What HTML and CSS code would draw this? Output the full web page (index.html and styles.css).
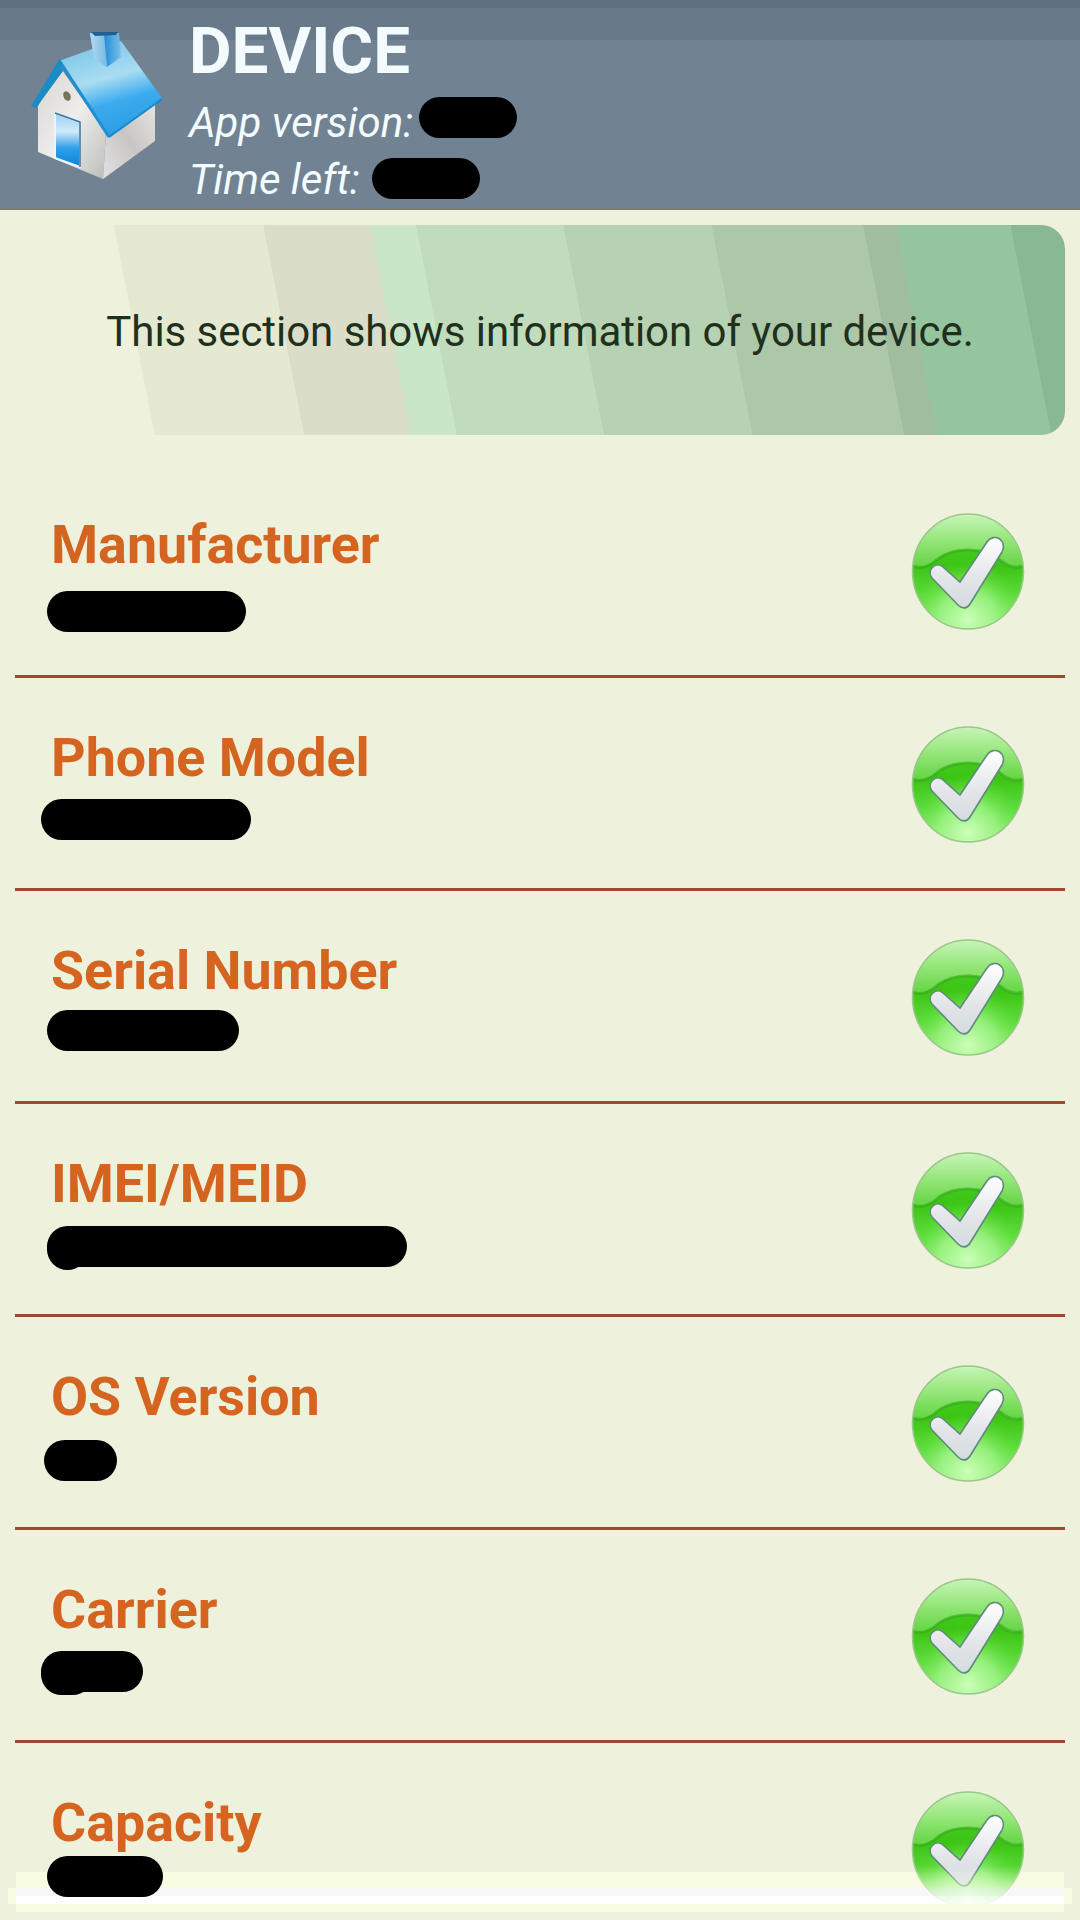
FILE: index.html
```html
<!DOCTYPE html>
<html lang="en">
<head>
<meta charset="utf-8">
<title>Device</title>
<link rel="stylesheet" href="styles.css">
</head>
<body>
<svg class="defs" width="0" height="0" aria-hidden="true">
  <defs>
    <linearGradient id="ball" x1="0" y1="0" x2="0" y2="1">
      <stop offset="0" stop-color="#4fd42c"/><stop offset=".45" stop-color="#3cc414"/><stop offset=".72" stop-color="#5fdc3e"/><stop offset="1" stop-color="#a5f28c"/>
    </linearGradient>
    <radialGradient id="glow" cx=".5" cy=".92" r=".52">
      <stop offset="0" stop-color="#cbffb8"/><stop offset=".5" stop-color="#a0f488" stop-opacity=".75"/><stop offset="1" stop-color="#50dc28" stop-opacity="0"/>
    </radialGradient>
    <linearGradient id="gloss" x1="0" y1="0" x2="0" y2="1">
      <stop offset="0" stop-color="#c8f5b8"/><stop offset=".5" stop-color="#93e678"/><stop offset="1" stop-color="#62d440"/>
    </linearGradient>
    <linearGradient id="tick" x1="0" y1="0" x2="0" y2="1">
      <stop offset="0" stop-color="#ffffff"/><stop offset=".6" stop-color="#e2e4e8"/><stop offset="1" stop-color="#d4dcdf"/>
    </linearGradient>
    <symbol id="check" viewBox="0 0 116 120">
      <ellipse cx="58" cy="59.500" rx="55.500" ry="57.500" fill="url(#ball)"/>
      <ellipse cx="58" cy="59.500" rx="55.500" ry="57.500" fill="url(#glow)"/>
      <path d="M3 54C5 24 28 2 58 2S111 24 113 54C104 58 96 54 90 48C74 35 46 35 30 45C22 52 12 57 3 54Z" fill="url(#gloss)"/>
      <path d="M3 54C12 58 22 53 29 46C46 35 72 35 90 48C97 54 105 57 113 54" fill="none" stroke="#35a81c" stroke-width="3" opacity=".6"/>
      <ellipse cx="58" cy="59.500" rx="55.500" ry="57.500" fill="none" stroke="#9cc68c" stroke-width="1.500"/>
      <path d="M22 66C16 58 26 49 33 55L50 70L77 30C84 20 98 28 92 40L60 92C57 97 52 97 48 93Z" fill="url(#tick)" stroke="#5f8a7c" stroke-width="1.600"/>
    </symbol>
    <linearGradient id="roof" x1=".3" y1="0" x2=".6" y2="1">
      <stop offset="0" stop-color="#7cc4ea"/><stop offset=".4" stop-color="#a9ddf2"/><stop offset=".65" stop-color="#3cabee"/><stop offset="1" stop-color="#2a9ce4"/>
    </linearGradient>
    <linearGradient id="wall" x1="0" y1="0" x2="1" y2="1">
      <stop offset="0" stop-color="#d8d4d0"/><stop offset=".5" stop-color="#eeeeed"/><stop offset="1" stop-color="#bcbcbb"/>
    </linearGradient>
    <linearGradient id="side" x1="0" y1="1" x2="1" y2="0">
      <stop offset="0" stop-color="#e2e2e2"/><stop offset=".5" stop-color="#c8c6c4"/><stop offset="1" stop-color="#e8e4e0"/>
    </linearGradient>
    <linearGradient id="door" x1="0" y1="0" x2="0" y2="1">
      <stop offset="0" stop-color="#9cd2f4"/><stop offset=".35" stop-color="#cfe9fa"/><stop offset=".65" stop-color="#2f9fe8"/><stop offset="1" stop-color="#0b82da"/>
    </linearGradient>
    <linearGradient id="flue" x1="0" y1="0" x2="1" y2="0">
      <stop offset="0" stop-color="#cfe9f8"/><stop offset=".5" stop-color="#2c90d6"/><stop offset="1" stop-color="#78c0ea"/>
    </linearGradient>
  </defs>
</svg>

<header class="header">
  <svg class="house" viewBox="0 0 140 154">
    <path d="M10 77L32 38L78 104L75 150L10 123Z" fill="url(#wall)"/>
    <path d="M75 150L78 104L127 72V112Z" fill="url(#side)"/>
    <path d="M27 84L52 93V138L27 129Z" fill="url(#door)" stroke="#eef5f8" stroke-width="2"/>
    <path d="M27 84L52 93V138" fill="none" stroke="#376f94" stroke-width="1.500"/>
    <ellipse cx="39" cy="67" rx="3.500" ry="5" transform="rotate(-25 39 67)" fill="#77745d"/>
    <path d="M31 32L64 20L93 12L134 69L81 108Z" fill="url(#roof)"/>
    <path d="M31 31L81 108" fill="none" stroke="#1e8fd4" stroke-width="3"/>
    <path d="M32 29L3 77L8 79L35 42Z" fill="#1b8bc6"/>
    <path d="M81 108L134 70" fill="none" stroke="#1787d2" stroke-width="2"/>
    <path d="M62 4L91 4L93 28L79 38L66 29Z" fill="url(#flue)"/>
    <path d="M62 4L76 6L79 38L66 29Z" fill="#a6d4ee" opacity=".65"/>
    <path d="M63 3H90L88 6L67 7Z" fill="#235f91"/>
  </svg>
  <div class="heading">
    <h1 class="title">DEVICE</h1>
    <p class="meta">App version:<span class="mask mask-version"></span></p>
    <p class="meta">Time left:<span class="mask mask-time"></span></p>
  </div>
</header>

<section class="banner">This section shows information of your device.</section>

<main class="list">
  <div class="row"><div class="info"><h2 class="label">Manufacturer</h2><span class="mask mask-manufacturer"></span></div><svg class="check"><use href="#check"/></svg></div>
  <div class="row"><div class="info"><h2 class="label">Phone Model</h2><span class="mask mask-model"></span></div><svg class="check"><use href="#check"/></svg></div>
  <div class="row"><div class="info"><h2 class="label">Serial Number</h2><span class="mask mask-serial"></span></div><svg class="check"><use href="#check"/></svg></div>
  <div class="row"><div class="info"><h2 class="label">IMEI/MEID</h2><span class="mask mask-imei"></span></div><svg class="check"><use href="#check"/></svg></div>
  <div class="row"><div class="info"><h2 class="label">OS Version</h2><span class="mask mask-os"></span></div><svg class="check"><use href="#check"/></svg></div>
  <div class="row"><div class="info"><h2 class="label">Carrier</h2><span class="mask mask-carrier"></span></div><svg class="check"><use href="#check"/></svg></div>
  <div class="row"><div class="info"><h2 class="label">Capacity</h2><span class="mask mask-capacity"></span></div><svg class="check check-fading"><use href="#check"/></svg></div>
</main>
<div class="fade"></div>
</body>
</html>
```
FILE: styles.css
```css
* { box-sizing: border-box; margin: 0; padding: 0; }

body {
  position: relative;
  width: 1080px;
  height: 1920px;
  overflow: hidden;
  display: flex;
  flex-direction: column;
  background: #eef1db;
  font-family: Roboto, "Liberation Sans", sans-serif;
}

.defs { position: absolute; }

.header {
  display: flex;
  flex: none;
  height: 210px;
  padding: 29px 0 0 28px;
  background: linear-gradient(#5f7080 8px, #687a8a 8px 40px, #718393 40px);
  border-bottom: 2px solid #7b7d70;
}

.house { width: 140px; height: 154px; flex: none; }

.heading { margin-left: 21px; color: #f4fbff; }

.title {
  height: 65px;
  margin-top: -18px;
  font-size: 65.5px;
  line-height: 80px;
  font-weight: 700;
}

.meta {
  display: flex;
  height: 57px;
  align-items: center;
  font-size: 42px;
  font-style: italic;
  white-space: nowrap;
}

.title + .meta { margin-top: 18px; }

.mask { display: block; flex: none; height: 41px; border-radius: 21px; background: #000; }
.mask-version { width: 98px; margin: 0 0 11px 6px; }
.mask-time { width: 108px; margin: 0 0 3px 12px; }

.banner {
  display: flex;
  flex: none;
  align-items: center;
  justify-content: center;
  height: 210px;
  margin: 15px 15px 0;
  padding-top: 2px;
  border-radius: 24px;
  font-size: 42px;
  letter-spacing: -0.05px;
  color: #20301c;
  white-space: nowrap;
  background: linear-gradient(79deg, transparent 0 12.8%, #e5e9d2 12.8% 26.5%, #dadec8 26.5% 36.3%, #c9e6c8 36.3% 40.5%, #c0dcbc 40.5% 54%, #b6d2b2 54% 67.6%, #acc8a8 67.6% 81.5%, #a1bd9f 81.5% 84.5%, #94c59f 84.5% 95%, #88b994 95%);
}

.list { position: relative; z-index: 1; flex: none; margin: 30px 15px 0; }

.row {
  display: flex;
  justify-content: space-between;
  height: 213px;
  border-bottom: 3px solid #a04832;
}

.row:last-child { border-bottom: 0; }

.info { padding: 47px 0 0 36px; }

.label {
  height: 66px;
  font-size: 53.8px;
  line-height: 66px;
  font-weight: 700;
  color: #d4641f;
}

.check { width: 116px; height: 120px; margin: 47px 39px 0 0; flex: none; }

.check-fading {
  -webkit-mask-image: linear-gradient(#000 76px, rgba(0, 0, 0, .25) 105px, rgba(0, 0, 0, .12) 114px, transparent 114px);
  mask-image: linear-gradient(#000 76px, rgba(0, 0, 0, .25) 105px, rgba(0, 0, 0, .12) 114px, transparent 114px);
}

.info .mask { position: relative; }
.mask-manufacturer { width: 199px; margin: 13px 0 0 -4px; }
.mask-model { width: 210px; margin: 8px 0 0 -10px; }
.mask-serial { width: 192px; margin: 6px 0 0 -4px; }
.mask-imei { width: 360px; margin: 9px 0 0 -4px; }
.mask-os { width: 73px; margin: 10px 0 0 -7px; }
.mask-carrier { width: 102px; margin: 8px 0 0 -10px; }
.mask-capacity { width: 116px; margin: 0 0 0 -4px; }

.mask-imei::after,
.mask-carrier::after {
  content: "";
  position: absolute;
  left: 0;
  top: 3px;
  width: 41px;
  height: 41px;
  border-radius: 21px;
  background: #000;
}

.mask-carrier::after { width: 52px; }

.fade {
  position: absolute;
  left: 16px;
  right: 16px;
  top: 1872px;
  height: 40px;
  background: linear-gradient(#f8fce3 16px, #f8f8f8 16px 24px, #fff 24px 32px, #f8fce3 32px);
}

.fade::before {
  content: "";
  position: absolute;
  z-index: -1;
  left: -8px;
  right: -8px;
  top: 16px;
  height: 16px;
  background: #f8fce3;
}
```
